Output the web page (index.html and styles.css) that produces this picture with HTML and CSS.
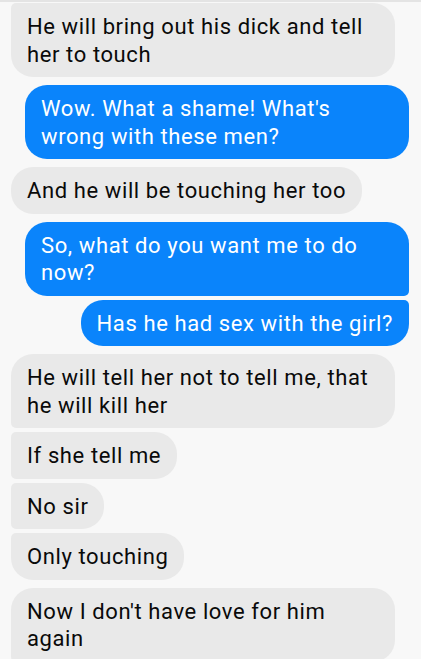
FILE: index.html
```html
<!DOCTYPE html>
<html lang="en">

<head>
	<meta charset="UTF-8" />
	<title>Messages</title>
	<link rel="stylesheet" href="styles.css">
</head>

<body>
	<div class="thread">
		<div class="msg in last">He will bring out his dick and tell her to touch</div>
		<div class="msg out single">Wow. What a shame! What's wrong with these men?</div>
		<div class="msg in single">And he will be touching her too</div>
		<div class="group">
			<div class="msg out first">So, what do you want me to do now?</div>
			<div class="msg out last">Has he had sex with the girl?</div>
		</div>
		<div class="group">
			<div class="msg in first">He will tell her not to tell me, that he will kill her</div>
			<div class="msg in mid">If she tell me</div>
			<div class="msg in mid">No sir</div>
			<div class="msg in last">Only touching</div>
		</div>
		<div class="msg in first">Now I don't have love for him again</div>
	</div>
</body>

</html>
```

FILE: styles.css
```css
html {
	overflow: hidden;
}

body {
	margin: 0;
	font-family: Roboto, "Noto Sans", Arial, sans-serif;
	background: #f8f8f8;
	border-top: 2px solid #e4e4e4;
}

.thread {
	display: flex;
	flex-direction: column;
	gap: 8px;
	padding: 1px 12px 0 11px;
}

.group {
	display: flex;
	flex-direction: column;
	gap: 4px;
}

.msg {
	max-width: 352px;
	padding: 10px 16px 9px;
	font-size: 22px;
	letter-spacing: 0.6px;
	line-height: 27.5px;
	border-radius: 22px;
}

.in {
	align-self: flex-start;
	background: #e9e9e9;
	color: #0a0a0a;
}

.out {
	align-self: flex-end;
	background: #0a84fb;
	color: #fff;
}

.in.first {
	border-bottom-left-radius: 5px;
}

.in.mid {
	border-top-left-radius: 5px;
	border-bottom-left-radius: 5px;
}

.in.last {
	border-top-left-radius: 5px;
}

.out.first {
	border-bottom-right-radius: 5px;
}

.out.last {
	border-top-right-radius: 5px;
}
```
